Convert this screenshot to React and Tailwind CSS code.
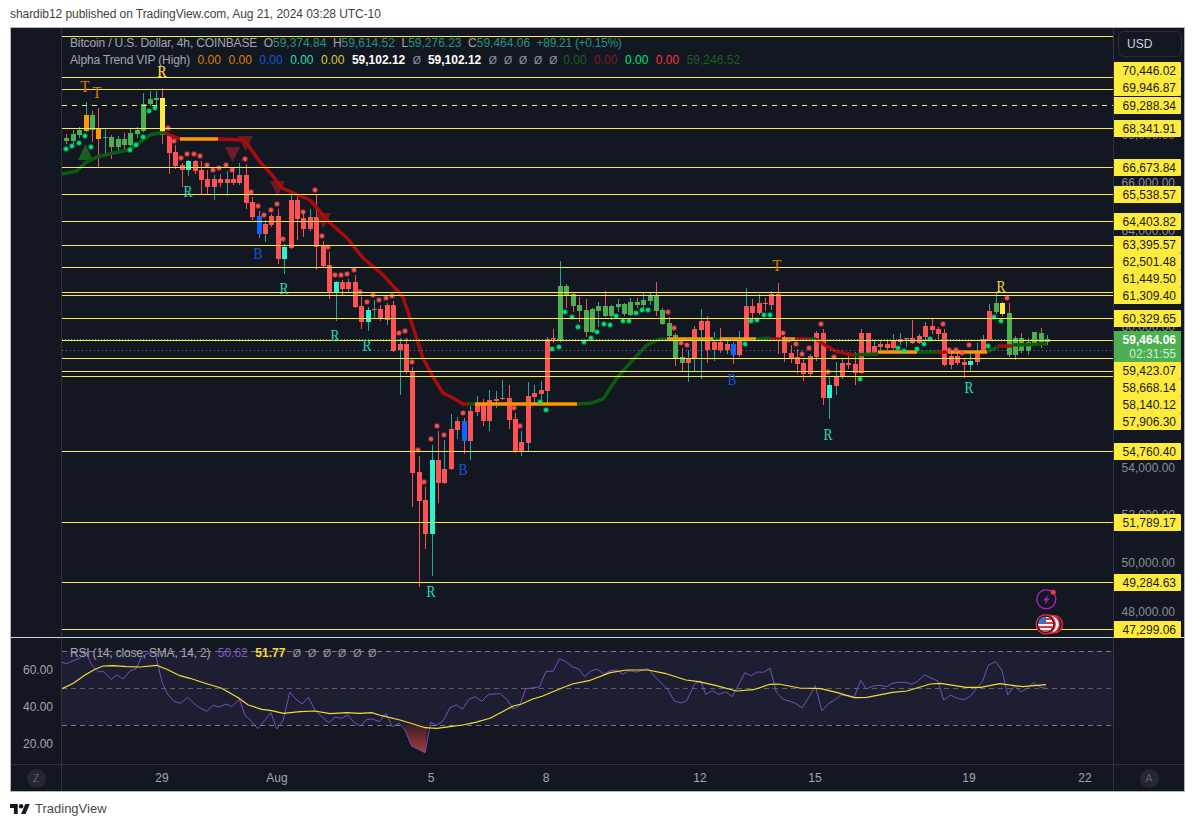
import React from 'react';

const font = { sans: "font-['Liberation_Sans',Arial,sans-serif]" };

// body top, body bottom, wick high, wick low, body colour, wick colour (page pixels)
const candles = [
  [138,141,134,144,'g','r'],[134,141,130,144,'g','t'],[130,135,127,138,'g','t'],[115,131,102,132,'o','t'],[115,130,111,142,'g','r'],[128,139,108,167,'o','r'],
  [137,138,129,153,'g','t'],[137,147,135,159,'g','r'],[139,147,136,154,'g','t'],[139,145,133,150,'g','r'],[133,145,129,147,'g','t'],[130,134,127,138,'g','t'],
  [104,131,93,132,'g','t'],[99,104,91,106,'g','t'],[98,100,91,108,'g','t'],[98,135,88,144,'y','r'],
  [134,153,133,174,'r','r'],[152,166,145,169,'r','r'],[165,170,163,187,'r','r'],[161,170,160,176,'a','t'],[161,171,160,174,'r','r'],[170,180,161,194,'r','r'],
  [179,187,170,194,'r','r'],[179,187,175,200,'r','t'],[179,183,174,187,'r','r'],[179,183,171,196,'r','t'],[179,183,168,185,'r','r'],[175,183,163,185,'r','t'],
  [175,203,164,209,'r','r'],[202,217,197,220,'r','r'],[216,234,211,238,'b','r'],[224,234,220,242,'r','t'],[216,225,214,227,'r','r'],[216,259,209,264,'r','r'],
  [247,259,244,274,'a','t'],[200,248,193,249,'r','t'],[200,219,195,240,'r','r'],[218,229,210,237,'r','r'],[217,229,209,231,'r','t'],[217,247,194,270,'r','r'],
  [246,266,241,267,'r','r'],[265,292,252,299,'r','r'],[282,292,281,321,'a','t'],[282,289,280,295,'r','r'],[282,289,279,292,'r','t'],[282,307,275,308,'r','r'],
  [306,322,297,329,'r','r'],[310,322,307,331,'a','t'],[309,310,300,319,'r','t'],[309,319,305,321,'r','r'],[305,320,303,325,'r','t'],[305,351,301,352,'r','r'],
  [344,350,338,395,'r','t'],[344,372,338,374,'r','r'],[372,473,367,507,'r','r'],[472,501,456,587,'r','r'],[500,534,487,549,'r','r'],[460,534,445,576,'a','t'],
  [460,483,431,503,'r','r'],[469,483,440,484,'r','t'],[429,469,414,470,'r','t'],[421,430,417,439,'r','t'],[421,441,418,454,'b','r'],[411,441,406,460,'r','t'],
  [403,412,396,416,'r','t'],[403,421,399,426,'r','r'],[400,421,390,431,'r','t'],[399,401,391,408,'r','t'],[398,399,380,400,'r','t'],[398,420,385,429,'r','r'],
  [419,451,413,453,'r','r'],[442,451,431,456,'r','t'],[396,443,382,451,'r','t'],[393,397,385,405,'r','t'],[390,394,381,403,'r','t'],[339,391,337,405,'r','t'],
  [338,339,329,343,'r','r'],[286,341,261,342,'g','t'],[286,295,284,308,'g','r'],[294,306,292,312,'g','r'],[305,311,297,322,'g','r'],[310,332,299,337,'g','r'],
  [309,332,308,333,'g','t'],[306,311,302,327,'g','t'],[306,316,291,317,'g','r'],[306,316,305,320,'g','t'],[304,307,299,312,'g','t'],[304,314,303,316,'g','r'],
  [302,315,298,316,'g','t'],[302,305,298,308,'g','r'],[300,305,293,308,'g','t'],[296,301,293,305,'g','t'],[296,311,282,316,'g','r'],[310,324,308,325,'g','r'],
  [323,336,317,340,'g','r'],[335,358,333,366,'g','r'],[357,363,348,371,'g','r'],[358,363,350,382,'r','t'],[329,358,326,371,'r','t'],[321,330,309,379,'r','t'],
  [321,350,316,363,'r','r'],[342,350,332,361,'r','t'],[342,350,328,353,'r','r'],[344,350,340,354,'r','t'],[344,355,342,364,'b','r'],[340,355,331,357,'r','t'],
  [306,339,288,340,'r','t'],[306,313,299,320,'r','r'],[303,313,294,315,'r','t'],[303,304,298,311,'r','r'],[294,305,291,310,'r','t'],[294,340,283,354,'r','r'],
  [340,353,336,362,'r','r'],[353,358,345,363,'r','r'],[357,364,349,374,'r','r'],[363,374,359,381,'r','r'],[356,374,354,376,'r','t'],[333,357,331,361,'r','t'],
  [333,398,329,405,'r','r'],[385,398,377,419,'a','t'],[377,386,362,395,'r','t'],[363,377,359,379,'r','t'],[363,365,352,369,'r','r'],[364,373,352,385,'r','r'],
  [333,373,329,374,'r','r'],[333,354,333,356,'r','r'],[346,354,341,356,'r','t'],[344,347,340,350,'r','t'],[344,348,340,350,'r','r'],[341,348,334,350,'r','t'],
  [339,342,333,345,'r','t'],[338,339,338,347,'r','t'],[338,343,320,344,'r','r'],[336,343,334,344,'r','t'],[326,337,322,340,'r','t'],[326,330,319,334,'r','r'],
  [329,334,327,339,'r','r'],[333,365,329,366,'r','r'],[356,365,350,369,'r','t'],[356,363,350,365,'r','r'],[362,365,358,378,'r','r'],[361,365,350,371,'a','t'],
  [352,362,343,365,'r','t'],[339,352,335,353,'r','t'],[311,340,304,341,'r','t'],[303,312,293,314,'g','t'],[303,314,302,316,'y','r'],[313,355,303,357,'g','r'],
  [338,355,336,360,'g','t'],[338,351,333,353,'g','r'],[342,351,338,355,'g','t'],[332,343,332,345,'g','r'],[333,342,328,348,'g','r'],[339,342,335,345,'g','t'],
];

const bodyFill = { r: '#ff5252', g: '#4caf50', a: '#2bf5c9', b: '#0b66ff', o: '#ff9800', y: '#ffeb3b' };
const wickFill = { r: '#ef5350', t: '#26a69a' };

const greenDots = [
  [66,149],[72,146],[79,143],[85,136],[91,147],[130,150],[136,145],[143,137],[149,111],[155,108],
  [540,402],[546,410],[552,349],[559,347],[565,312],[572,317],[578,327],[584,342],[591,338],[597,332],[604,324],[610,325],[616,316],[623,321],[629,321],[636,313],[642,310],[648,310],
  [745,344],[751,321],[757,320],[764,315],[770,315],[860,379],[898,348],[904,351],[917,349],[924,344],[930,339],[988,346],[994,317],[1001,321],
];
const redDots = [
  [168,128],[174,141],[181,158],[187,154],[194,154],[200,156],[207,165],[213,170],[219,168],[226,165],[232,170],[245,159],[251,192],[258,206],[264,215],[271,210],[277,204],[283,239],
  [303,212],[315,190],[322,236],[328,247],[335,275],[341,275],[347,274],[354,270],[360,292],[367,302],[373,295],[379,300],[386,298],[392,296],[399,333],[405,331],[412,362],[418,450],[424,482],
  [431,439],[437,426],[444,435],[463,413],[514,408],[520,426],[668,312],[674,328],[681,343],[687,345],[783,333],[789,340],[796,344],[802,354],[809,348],[821,324],[828,372],[834,357],
  [943,324],[949,350],[956,350],[962,353],[969,345],[1007,298],
];

const GREEN = '#0b5a12';
const RED = '#ab0b0b';
const ORANGE = '#ff9800';
const trend = [
  [GREEN, '62,174 77,171 85,163 97,157 113,153 128,150 140,142 150,135 158,133 165,133'],
  [RED, '165,133 170,135 180,139'],
  [ORANGE, '180,139 218,139'],
  [RED, '218,139 244,140 250,148 260,162 272,175 282,188 298,195 310,200 330,223 347,238 363,258 383,275 403,297 413,327 423,358 433,377 443,393 455,399 463,404 468,404'],
  [GREEN, '468,404 475,404'],
  [ORANGE, '475,404 577,404'],
  [GREEN, '577,404 592,403 603,399 617,378 630,363 647,345 660,339 667,339'],
  [ORANGE, '667,339 713,339'],
  [GREEN, '713,339 720,339'],
  [ORANGE, '720,339 756,339'],
  [GREEN, '756,339 770,338'],
  [RED, '770,339 782,339'],
  [ORANGE, '782,339 795,339'],
  [RED, '795,339 810,339'],
  [GREEN, '810,339 816,339'],
  [RED, '816,339 825,345 835,351 853,355'],
  [GREEN, '853,355 878,354'],
  [ORANGE, '878,352 917,352'],
  [GREEN, '917,352 937,352'],
  [RED, '937,352 948,352'],
  [ORANGE, '948,352 987,352'],
  [GREEN, '987,352 998,347'],
  [RED, '998,346 1012,346'],
  [GREEN, '1012,345 1047,344'],
];

const lines = [36,77,89,128,167,194,221,245,267,292,295,318,340,358,371,376,451,522,582,629];

const marks = [
  ['T',85,92,'#d97e00'],['T',97,98,'#d97e00'],['R',162,77,'#d97e00'],['R',162,77,'#f5dc3c'],['R',188,197,'#2bdcb8'],['B',258,259,'#0d56d6'],
  ['R',284,294,'#2bdcb8'],['R',335,341,'#2bdcb8'],['R',367,351,'#2bdcb8'],['R',431,597,'#2bdcb8'],['B',463,475,'#0d56d6'],['B',732,385,'#0d56d6'],
  ['R',828,440,'#2bdcb8'],['T',777,271,'#d97e00'],['R',1001,292,'#f5dc3c'],['R',969,393,'#2bdcb8'],
];

const downTriangles = [[225,147],[238,136],[270,181],[316,213]];

const axisPrices = [
  ['68,000.00',135],['66,000.00',183],['64,000.00',231],['60,000.00',327],['54,000.00',468],['52,000.00',515],['50,000.00',563],['48,000.00',612],
];
const priceTags = [
  ['70,446.02',62],['69,946.87',79],['69,288.34',97],['68,341.91',120],['66,673.84',159],['65,538.57',186],['64,403.82',213],
  ['63,395.57',236],['62,501.48',253],['61,449.50',270],['61,309.40',287],['60,329.65',310],['59,423.07',362],['58,668.14',379],['58,140.12',396],['57,906.30',413],
  ['54,760.40',443],['51,789.17',514],['49,284.63',574],['47,299.06',621],
];
const days = [['29',162],['Aug',277],['5',431],['8',546],['12',700],['15',815],['19',969],['22',1085]];

// RSI traces, read off the picture in page pixels
const rsiA = [[186,96],[198,102],[220,92],[240,85],[258,65],[275,105],[295,125],[312,125],[333,148],[350,135],[370,147],[390,122],[408,116],[425,80],[445,70],[465,67],[487,160],[503,193],[522,214],[542,220],[563,202],[580,218],[600,234],[620,244],[640,226],[658,231],[678,222],[695,230],[718,208],[735,255],[755,275],[773,296],[793,272],[813,248],[830,297],[850,270],[869,187],[888,208],[907,222],[925,202],[945,240],[965,260],[987,278],[1005,261],[1025,265],[1043,255],[1062,277],[1081,288],[1100,268],[1118,267],[1138,275],[1158,250],[1177,290],[1197,280],[1215,300],[1235,348],[1255,358],[1275,368],[1292,277],[1310,286],[1330,272]]
  .map(([x, y]) => [x / 3, 630 + y / 3]);
const rsiB = [[0,203],[15,195],[30,207],[45,178],[60,170],[75,184],[92,163],[120,161],[135,178],[150,207],[165,197],[180,146],[212,141],[228,94],[245,94],[260,56],[275,65],[290,80],[305,87],[320,110],[335,92],[350,88],[365,102],[380,92],[395,90],[410,103],[425,92],[442,96],[470,86],[487,110],[502,130],[518,150],[532,182],[548,189],[562,182],[580,133],[595,122],[607,163],[623,152],[638,163],[655,156],[670,170],[700,98],[715,107],[730,96],[745,97],[760,85],[775,158],[790,177],[805,183],[820,190],[836,203],[852,172],[867,137],[883,212],[900,190],[913,180],[928,165],[960,170],[975,121],[988,147],[1005,138],[1020,136],[1036,140],[1050,130],[1065,127],[1082,127],[1096,133],[1110,124],[1126,105],[1158,123],[1172,180],[1188,165],[1204,175],[1220,179],[1234,170],[1264,125],[1278,76],[1295,65],[1310,90],[1324,165],[1340,138],[1355,156],[1370,145],[1385,128],[1400,142],[1415,145]]
  .map(([x, y]) => [450 + x / 2.374, 640 + y / 3]);
const smaA = [[186,176],[220,160],[255,135],[285,118],[310,108],[340,107],[380,110],[420,111],[470,106],[500,118],[540,137],[570,145],[620,161],[665,175],[715,203],[745,225],[785,238],[815,242],[850,250],[900,245],[945,243],[990,251],[1040,248],[1080,250],[1115,248],[1145,257],[1200,270],[1240,282],[1275,293],[1310,295]]
  .map(([x, y]) => [x / 3, 630 + y / 3]);
const smaB = [[0,260],[30,255],[60,247],[95,235],[120,218],[150,198],[170,192],[195,178],[220,168],[260,147],[290,132],[330,122],[380,98],[420,90],[470,90],[510,100],[560,120],[590,125],[630,136],[680,153],[720,149],[760,133],[780,132],[830,144],[880,146],[920,158],[960,173],[990,172],[1050,157],[1085,153],[1140,132],[1165,130],[1225,142],[1260,142],[1305,131],[1360,140],[1415,134]]
  .map(([x, y]) => [450 + x / 2.374, 640 + y / 3]);
const toPoints = (pts) => pts.map(([x, y]) => `${x.toFixed(1)},${y.toFixed(1)}`).join(' ');

const PriceChart = () => (
  <svg className="block w-[1051px] h-[609px]" viewBox="62 28 1051 609">
    <g shapeRendering="crispEdges">
      {candles.map(([top, bot, hi, lo, body, wick], i) => {
        const x = Math.round(66.3 + 6.41 * i);
        return (
          <g key={i}>
            <rect x={x} y={hi} width="1" height={lo - hi} fill={wickFill[wick]} />
            <rect x={x - 2} y={top} width="5" height={Math.max(bot - top, 1)} fill={bodyFill[body]} />
          </g>
        );
      })}
    </g>
    <path d="M78 160l7.5-16 7.5 16z" fill="#1b5e20" />
    {downTriangles.map(([x, y]) => (
      <path key={x} d={`M${x} ${y}h15l-7.5 15.5z`} fill="#7a1c24" fillOpacity="0.85" />
    ))}
    {trend.map(([color, pts], i) => (
      <polyline key={i} points={pts} fill="none" stroke={color} strokeWidth="3.5" strokeLinejoin="round" />
    ))}
    {greenDots.map(([x, y]) => (
      <g key={`${x}-${y}`}><circle cx={x} cy={y} r="3" fill="#00e676" fillOpacity="0.35" /><circle cx={x} cy={y} r="2" fill="#00e676" /></g>
    ))}
    {redDots.map(([x, y]) => (
      <g key={`${x}-${y}`}><circle cx={x} cy={y} r="3" fill="#ff5252" fillOpacity="0.35" /><circle cx={x} cy={y} r="2" fill="#ff5252" /></g>
    ))}
    <g shapeRendering="crispEdges">
      <line x1="62" x2="1047" y1="339.5" y2="339.5" stroke="#4caf50" strokeDasharray="1 2" />
      <line x1="62" x2="1113" y1="350.5" y2="350.5" stroke="#787b86" strokeDasharray="1 3" />
      {lines.map((y) => (
        <line key={y} x1="62" x2="1113" y1={y + 0.5} y2={y + 0.5} stroke="#ffeb3b" />
      ))}
      <line x1="62" x2="1113" y1="105.5" y2="105.5" stroke="#ffee58" strokeDasharray="5 5" />
    </g>
    {marks.map(([ch, x, y, color], i) => (
      <text key={i} x={x} y={y} textAnchor="middle" fill={color} fontSize="16.5" textLength="9" lengthAdjust="spacingAndGlyphs" fontFamily="'Liberation Serif', serif">{ch}</text>
    ))}
    <circle cx="1046.3" cy="599.3" r="9.5" fill="#131722" stroke="#9c27b0" strokeWidth="1.5" />
    <path d="M1049 594l-6 6.5h3l-2 4.5 6-6.5h-3z" fill="#9c27b0" />
    <circle cx="1053.3" cy="592.3" r="2.5" fill="#f23645" />
    <circle cx="1054" cy="624.3" r="8.5" fill="#131722" stroke="#e02a3c" strokeWidth="1.5" />
    <circle cx="1050.5" cy="624.3" r="9" fill="#f5f5f5" stroke="#e02a3c" strokeWidth="1.5" />
    <circle cx="1045.7" cy="624.3" r="9.5" fill="#131722" stroke="#e02a3c" strokeWidth="1.5" />
    <clipPath id="flag"><circle cx="1045.7" cy="624.3" r="7.5" /></clipPath>
    <g clipPath="url(#flag)">
      <rect x="1038" y="616" width="16" height="17" fill="#f5f5f5" />
      <rect x="1038" y="618" width="16" height="2" fill="#e0383f" />
      <rect x="1038" y="622" width="16" height="2" fill="#e0383f" />
      <rect x="1038" y="626" width="16" height="2" fill="#e0383f" />
      <rect x="1038" y="630" width="16" height="2" fill="#e0383f" />
      <rect x="1038" y="616" width="8" height="8" fill="#3c6fc4" />
    </g>
  </svg>
);

const RsiChart = () => (
  <svg className="block w-[1051px] h-[126px]" viewBox="62 638 1051 126">
    <defs>
      <linearGradient id="under" x1="0" y1="0" x2="0" y2="1">
        <stop offset="0" stopColor="#3a1f2c" />
        <stop offset="1" stopColor="#a83a3a" />
      </linearGradient>
    </defs>
    <rect x="62" y="651" width="1051" height="74" fill="#1e1e33" />
    <g shapeRendering="crispEdges" stroke="#787b86" strokeDasharray="5 4">
      <line x1="62" x2="1113" y1="651.5" y2="651.5" />
      <line x1="62" x2="1113" y1="688.5" y2="688.5" stroke="#5d606b" />
      <line x1="62" x2="1113" y1="725.5" y2="725.5" />
    </g>
    <path d="M403 725 L405 730 L412 746 L425 752.7 L428 725z" fill="url(#under)" />
    <polyline points={toPoints([...rsiA, ...rsiB])} fill="none" stroke="#7450bd" strokeWidth="1" />
    <polyline points={toPoints([...smaA, ...smaB])} fill="none" stroke="#f5df2e" strokeWidth="1.2" />
  </svg>
);

const Nil = () => <span className="inline-block w-[7.6px] text-center text-[#9598a1] text-[10.5px]">Ø</span>;

const Ohlc = ({ k, v }) => (
  <span><span className="text-[#a3a6af]">{k}</span><span className="text-[#2b8f84]">{v}</span></span>
);

const Legend = () => (
  <div className="absolute left-[8px] top-[7px] text-[12px] leading-[16.5px]">
    <div className="flex gap-[6.5px] text-[#a3a6af]">
      <span className="tracking-[-0.14px]">Bitcoin / U.S. Dollar, 4h, COINBASE</span>
      <Ohlc k="O" v="59,374.84" /><Ohlc k="H" v="59,614.52" /><Ohlc k="L" v="59,276.23" /><Ohlc k="C" v="59,464.06" />
      <span className="text-[#2b8f84] tracking-[-0.3px]">+89.21 (+0.15%)</span>
    </div>
    <div className="flex gap-[7.5px] text-[#a3a6af] items-center">
      <span className="tracking-[-0.14px]">Alpha Trend VIP (High)</span>
      <span className="text-[#d98500]">0.00</span>
      <span className="text-[#d98500]">0.00</span>
      <span className="text-[#0d56d6]">0.00</span>
      <span className="text-[#2bdcb8]">0.00</span>
      <span className="text-[#e0cc34]">0.00</span>
      <span className="text-white font-bold">59,102.12</span>
      <Nil />
      <span className="text-white font-bold">59,102.12</span>
      <Nil /><Nil /><Nil /><Nil /><Nil />
      <span className="text-[#1b5e20] -ml-[1px]">0.00</span>
      <span className="text-[#801922]">0.00</span>
      <span className="text-[#00e676]">0.00</span>
      <span className="text-[#f23645]">0.00</span>
      <span className="text-[#1b5e20]">59,246.52</span>
    </div>
  </div>
);

const RsiLegend = () => (
  <div className="absolute left-[8px] top-[7px] flex items-center gap-[7.5px] text-[12px] leading-[17px] text-[#a3a6af]">
    <span className="tracking-[-0.19px]">RSI (14, close, SMA, 14, 2)</span>
    <span className="text-[#7e57c2]">50.62</span>
    <span className="text-[#f5df2e] font-bold">51.77</span>
    <Nil /><Nil /><Nil /><Nil /><Nil /><Nil />
  </div>
);

const PriceAxis = () => (
  <div className="relative h-full text-[12px]">
    <div className="absolute left-[4px] top-[3px] w-[64px] h-[26px] border border-[#2a2e39] rounded-md flex items-center pl-[8px] text-[#d1d4dc]">USD</div>
    {axisPrices.map(([label, y]) => (
      <div key={label} className="absolute right-[9px] leading-[16px] text-[#8b8e98]" style={{ top: y - 36 }}>{label}</div>
    ))}
    {priceTags.map(([label, y]) => (
      <div key={label} className="absolute left-0 w-[67px] h-[17px] pr-[5px] bg-[#ffeb3b] text-[#1a1a1a] flex items-center justify-end rounded-r-[1px]" style={{ top: y - 28 }}>{label}</div>
    ))}
    <div className="absolute left-0 top-[303px] w-[67px] h-[31px] pr-[5px] bg-[#4caf50] flex flex-col items-end justify-center leading-[14px]">
      <span className="text-white font-bold">59,464.06</span>
      <span className="text-[#d5ecd6]">02:31:55</span>
    </div>
  </div>
);

const Tag = ({ children }) => (
  <div className="w-[19px] h-[19px] rounded-full bg-[#242732] text-[#5d606b] text-[11px] flex items-center justify-center">{children}</div>
);

export default function App() {
  return (
    <div className={`w-[1195px] h-[827px] bg-white overflow-hidden ${font.sans}`}>
      <div className="h-[27px] pl-[10px] pt-[6px] text-[12px] leading-[17px] tracking-[-0.06px] text-[#3f3f3f]">
        shardib12 published on TradingView.com, Aug 21, 2024 03:28 UTC-10
      </div>
      <div className="ml-[10px] w-[1175px] h-[765px] border border-[#b2b5be] bg-[#131722] grid grid-cols-[51px_1052px_1fr] grid-rows-[610px_127px_26px]">
        <div className="border-r border-b border-r-[#2f333e] border-b-[#d1d4dc]" />
        <div className="relative border-r border-b border-r-[#2f333e] border-b-[#d1d4dc]">
          <PriceChart />
          <Legend />
        </div>
        <div className="border-b border-b-[#d1d4dc]"><PriceAxis /></div>

        <div className="border-r border-b border-[#2f333e] flex flex-col justify-between pt-[24px] pb-[12px] pr-[8px] items-end text-[12px] leading-[16px] text-[#a3a6af]">
          <span>60.00</span><span>40.00</span><span>20.00</span>
        </div>
        <div className="relative border-r border-b border-[#2f333e]">
          <RsiChart />
          <RsiLegend />
        </div>
        <div className="border-b border-[#2f333e]" />

        <div className="border-r border-[#2f333e] flex items-center justify-center"><Tag>Z</Tag></div>
        <div className="relative border-r border-[#2f333e] text-[12px] text-[#a3a6af]">
          {days.map(([label, x]) => (
            <span key={label} className="absolute top-[5px] -translate-x-1/2 leading-[16px]" style={{ left: x - 62 }}>{label}</span>
          ))}
        </div>
        <div className="flex items-center justify-center"><Tag>A</Tag></div>
      </div>
      <div className="pl-[10px] pt-[8px] flex items-center gap-[5px] text-[13px] leading-[18px] text-[#4a4a4a]">
        <svg className="w-[20px] h-[16px]" viewBox="0 2 36 22" fill="#131722">
          <path d="M14 22H7V11H0V4h14v18zM28 22h-8l7.5-18h8L28 22z" />
          <circle cx="20" cy="8" r="4" />
        </svg>
        TradingView
      </div>
    </div>
  );
}
